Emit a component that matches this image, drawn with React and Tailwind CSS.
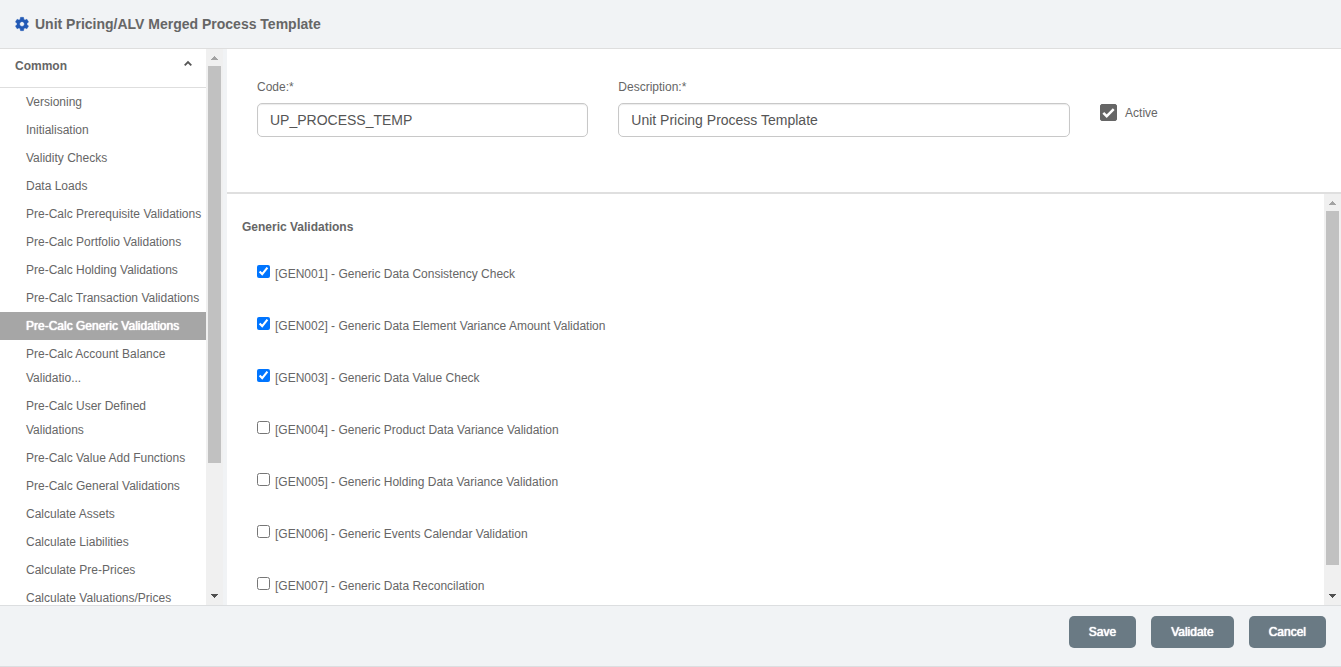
import { useState } from "react";

const STEPS = [
  "Versioning",
  "Initialisation",
  "Validity Checks",
  "Data Loads",
  "Pre-Calc Prerequisite Validations",
  "Pre-Calc Portfolio Validations",
  "Pre-Calc Holding Validations",
  "Pre-Calc Transaction Validations",
  "Pre-Calc Generic Validations",
  "Pre-Calc Account Balance Validatio...",
  "Pre-Calc User Defined Validations",
  "Pre-Calc Value Add Functions",
  "Pre-Calc General Validations",
  "Calculate Assets",
  "Calculate Liabilities",
  "Calculate Pre-Prices",
  "Calculate Valuations/Prices",
];

const VALIDATIONS = [
  { code: "GEN001", name: "Generic Data Consistency Check", on: true },
  { code: "GEN002", name: "Generic Data Element Variance Amount Validation", on: true },
  { code: "GEN003", name: "Generic Data Value Check", on: true },
  { code: "GEN004", name: "Generic Product Data Variance Validation", on: false },
  { code: "GEN005", name: "Generic Holding Data Variance Validation", on: false },
  { code: "GEN006", name: "Generic Events Calendar Validation", on: false },
  { code: "GEN007", name: "Generic Data Reconcilation", on: false },
];

function ScrollBar({ thumb }) {
  return (
    <div aria-hidden="true" className="flex w-[17px] shrink-0 flex-col items-center bg-[#f0f0f0]">
      <svg className="h-[17px] w-[17px] shrink-0" viewBox="0 0 17 17" shapeRendering="crispEdges">
        <path d="M8 7h1v1h1v1h1v1h1v1H5v-1h1V9h1V8h1z" fill="#a3a3a3" />
      </svg>
      <div className="min-h-0 w-full flex-1 px-0.5">
        <div className="w-full bg-[#c1c1c1]" style={{ height: `${thumb}%` }} />
      </div>
      <svg className="h-[17px] w-[17px] shrink-0" viewBox="0 0 17 17" shapeRendering="crispEdges">
        <path d="M5 6h7v1h-1v1h-1v1H9v1H8V9H7V8H6V7H5z" fill="#505050" />
      </svg>
    </div>
  );
}

function GearIcon() {
  return (
    <svg className="h-4 w-4 shrink-0" viewBox="0 0 24 24" fill="#2259b5" stroke="#2259b5" strokeWidth="0.6" aria-hidden="true">
      <path d="M19.43 12.98c.04-.32.07-.64.07-.98s-.03-.66-.07-.98l2.11-1.65c.19-.15.24-.42.12-.64l-2-3.46c-.12-.22-.39-.3-.61-.22l-2.49 1c-.52-.4-1.08-.73-1.69-.98l-.38-2.65C14.46 2.18 14.25 2 14 2h-4c-.25 0-.46.18-.49.42l-.38 2.65c-.61.25-1.17.59-1.69.98l-2.49-1c-.23-.09-.49 0-.61.22l-2 3.46c-.13.22-.07.49.12.64l2.11 1.65c-.04.32-.07.65-.07.98s.03.66.07.98l-2.11 1.65c-.19.15-.24.42-.12.64l2 3.46c.12.22.39.3.61.22l2.49-1c.52.4 1.08.73 1.69.98l.38 2.65c.03.24.24.42.49.42h4c.25 0 .46-.18.49-.42l.38-2.65c.61-.25 1.17-.59 1.69-.98l2.49 1c.23.09.49 0 .61-.22l2-3.46c.12-.22.07-.49-.12-.64l-2.11-1.65zM12 15.5c-1.93 0-3.5-1.57-3.5-3.5s1.57-3.5 3.5-3.5 3.5 1.57 3.5 3.5-1.57 3.5-3.5 3.5z" />
    </svg>
  );
}

function TextField({ id, label, value }) {
  return (
    <div className="flex flex-col gap-2 px-[15px]">
      <label htmlFor={id} className="leading-4">{label}</label>
      <input
        id={id}
        type="text"
        defaultValue={value}
        className="h-[34px] w-full rounded-[5px] border border-[#c8c8c8] bg-white px-3 text-sm text-[#555] shadow-[inset_0_1px_1px_rgba(0,0,0,0.08)]"
      />
    </div>
  );
}

function FooterButton({ children }) {
  return (
    <button type="button" className="h-8 rounded-[5px] bg-[#6a7a84] px-5 text-xs text-white [text-shadow:0_0_1px_#fff,0_0_1px_#fff]">
      {children}
    </button>
  );
}

export default function App() {
  const [current, setCurrent] = useState("Pre-Calc Generic Validations");
  const [open, setOpen] = useState(true);

  return (
    <div className="flex h-screen flex-col border-b border-[#dcdee0] bg-[#f1f3f5] font-['Liberation_Sans',Arial,sans-serif] text-xs text-[#666]">
      <header className="flex h-[49px] shrink-0 items-center gap-[5px] border-b border-[#dedede] px-3.5">
        <GearIcon />
        <h1 className="text-sm font-bold">Unit Pricing/ALV Merged Process Template</h1>
      </header>

      <div className="flex min-h-0 flex-1 gap-1">
        <aside className="flex shrink-0">
          <nav className="w-[206px] overflow-y-auto bg-white [scrollbar-width:none]">
            <button
              type="button"
              aria-expanded={open}
              onClick={() => setOpen(!open)}
              className="flex h-[39px] w-full items-start justify-between border-b border-[#dedede] pt-2 pr-3.5 pl-[15px] font-bold leading-[18px]"
            >
              Common
              <svg className="mt-[3px] h-2 w-2" viewBox="0 0 8 8" fill="none" stroke="#555" strokeWidth="1.8" aria-hidden="true">
                <path d="M.7 5.4L4 2.1l3.3 3.3" />
              </svg>
            </button>
            {open && (
              <ul>
                {STEPS.map((step) => (
                  <li key={step}>
                    <a
                      href="#"
                      onClick={() => setCurrent(step)}
                      className={
                        step === current
                          ? "block bg-[#a6a6a6] py-0.5 pl-[26px] leading-6 text-white [text-shadow:0_0_1px_#fff,0_0_1px_#fff]"
                          : "block py-0.5 pl-[26px] leading-6"
                      }
                    >
                      {step}
                    </a>
                  </li>
                ))}
              </ul>
            )}
          </nav>
          <ScrollBar thumb={76} />
        </aside>

        <main className="flex min-w-0 flex-1 flex-col bg-white">
          <section className="grid h-[145px] shrink-0 grid-cols-[3fr_4fr_2fr] border-b-2 border-[#dfdfdf] px-[15px] pt-[30px]">
            <TextField id="code" label="Code:*" value="UP_PROCESS_TEMP" />
            <TextField id="description" label="Description:*" value="Unit Pricing Process Template" />
            <label className="mt-[25px] flex items-center gap-2 self-start px-[15px]">
              <span className="grid h-[17px] w-[17px] place-items-center">
                <input
                  type="checkbox"
                  defaultChecked
                  className="peer col-start-1 row-start-1 h-[17px] w-[17px] appearance-none rounded-xs border border-[#666] checked:bg-[#666]"
                />
                <svg className="pointer-events-none invisible col-start-1 row-start-1 h-[17px] w-[17px] peer-checked:visible" viewBox="0 0 17 17" fill="none" stroke="#fff" strokeWidth="2.5" aria-hidden="true">
                  <path d="M3.3 8.8l3.4 3.4 7-7" />
                </svg>
              </span>
              Active
            </label>
          </section>

          <div className="flex min-h-0 flex-1">
            <section className="min-w-0 flex-1 overflow-y-auto px-[15px] pt-6 [scrollbar-width:none]">
              <h2 className="font-bold leading-[18px]">Generic Validations</h2>
              <ul className="mt-[11px] px-[15px]">
                {VALIDATIONS.map((v) => (
                  <li key={v.code} className="flex h-[52px] items-center">
                    <label className="flex items-baseline gap-[5px]">
                      <input type="checkbox" defaultChecked={v.on} className="h-[13px] w-[13px] shrink-0" />
                      <span>[{v.code}] - {v.name}</span>
                    </label>
                  </li>
                ))}
              </ul>
            </section>
            <ScrollBar thumb={94} />
          </div>
        </main>
      </div>

      <footer className="flex h-[61px] shrink-0 items-start justify-end gap-[15px] border-t border-[#dcdee0] px-[15px] pt-2.5">
        <FooterButton>Save</FooterButton>
        <FooterButton>Validate</FooterButton>
        <FooterButton>Cancel</FooterButton>
      </footer>
    </div>
  );
}
